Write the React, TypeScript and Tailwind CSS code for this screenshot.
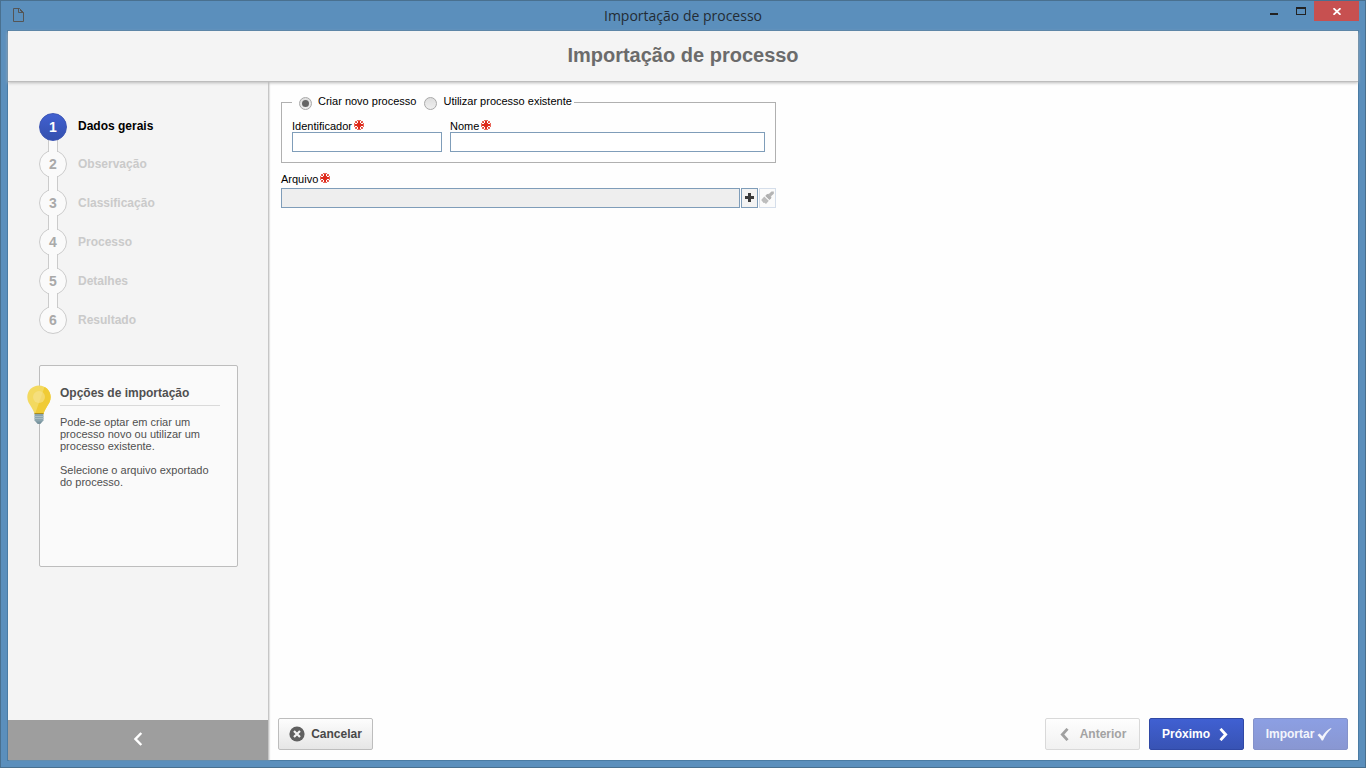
import { useState } from 'react'

const steps = ['Dados gerais', 'Observação', 'Classificação', 'Processo', 'Detalhes', 'Resultado']

const actionButton =
  'flex h-8 w-[95px] items-center justify-center rounded-[2px] border text-xs font-bold'

function RequiredMark() {
  return (
    <svg width="10" height="10" viewBox="0 0 10 10" className="shrink-0" shapeRendering="crispEdges" aria-hidden="true">
      <path d="M3 0h4v1H3zM3 9h4v1H3zM0 3h1v4H0zM9 3h1v4H9zM1 1h2v1H2v1H1zM7 1h2v2H8V2H7zM1 7h1v1h1v1H1zM8 7h1v2H7V8h1z" fill="#e8685c" />
      <path d="M4 1h2v3h3v2H6v3H4V6H1V4h3z" fill="#dd2a1c" />
      <path d="M2 2h1v1h1v1H3V3H2zM7 2h1v1H7v1H6V3h1zM2 7h1V6h1v1H3v1H2zM7 7V6H6v1h1v1h1V7z" fill="#e03a2c" />
    </svg>
  )
}

function Bulb() {
  return (
    <svg width="24" height="40" viewBox="0 0 24 40" className="absolute top-[19px] -left-[13px]" aria-hidden="true">
      <path d="M12 0.5C5.4 0.5 0.3 5.6 0.3 12c0 4 1.8 6.500 3.700 9.500 1.600 2.600 2.800 4.800 3.500 7.500h9c.7-2.700 1.900-4.900 3.500-7.500 1.900-3 3.700-5.500 3.700-9.500C23.700 5.600 18.600 .5 12 .5z" fill="#f3d95f" />
      <path d="M17.500 1.900 8 29h8.500c.7-2.700 1.900-4.900 3.500-7.500 1.900-3 3.700-5.500 3.700-9.500 0-4.300-2.300-8-6.200-10.100z" fill="#f0cb35" />
      <circle cx="12" cy="12" r="6" fill="#f7e391" opacity=".6" />
      <path d="M7.500 28h9v1.200h-9z" fill="#a98d22" />
      <path d="M7.500 29h9v6.500L15 37H9l-1.500-1.500z" fill="#8ba5ae" />
      <path d="M7.500 31.500h9M7.500 33.500h9" stroke="#aabdc3" strokeWidth="1" />
      <path d="M8.500 36.500h7L13.300 39h-2.600z" fill="#78939d" />
    </svg>
  )
}

function TitleBar() {
  return (
    <div className="flex h-[29px] shrink-0 items-start">
      <div className="flex flex-1">
        <svg width="11" height="14" viewBox="0 0 11 14" fill="none" stroke="#555" className="mt-[7px] ml-[12px]" aria-hidden="true">
          <path d="M.5 .5h6l4 4v9H.5z" />
          <path d="M5.500 .5v4h5" />
          <path d="M7 2l2 2" />
        </svg>
      </div>
      <div className="pt-[5px] font-['Open_Sans',sans-serif] text-sm leading-5 text-[#232c35]">Importação de processo</div>
      <div className="flex flex-1 justify-end">
        <button type="button" aria-label="Minimizar" className="flex h-5 w-[27px] justify-center pt-[12px]">
          <span className="h-[2px] w-2 bg-[#222]" />
        </button>
        <button type="button" aria-label="Maximizar" className="flex h-5 w-[27px] justify-center pt-[6px]">
          <span className="h-2 w-[10px] border border-t-2 border-[#222]" />
        </button>
        <button type="button" aria-label="Fechar" className="mr-[6px] flex h-5 w-[45px] items-center justify-center bg-[#c75050] text-white">
          <svg width="8" height="7" viewBox="0 0 8 7" stroke="currentColor" strokeWidth="1.700" aria-hidden="true">
            <path d="M.5 .2l7 6.600M7.500 .2l-7 6.600" />
          </svg>
        </button>
      </div>
    </div>
  )
}

function Sidebar() {
  return (
    <aside className="flex w-[261px] shrink-0 flex-col border-r border-[#c6c6c6] bg-[#f4f4f4] shadow-[1px_0_1px_#e4e4e4]">
      <ol className="mt-[31px] ml-[31px] flex flex-col">
        {steps.map((step, i) => (
          <li key={step} className={`relative flex items-start gap-[11px] ${i === 0 ? 'h-[37px]' : 'h-[39px]'}`}>
            <span
              className={`flex size-7 items-center justify-center rounded-full border text-sm font-bold ${
                i === 0
                  ? 'z-10 border-[#3c55b5] bg-linear-to-b from-[#4160d0] to-[#3450ae] text-white'
                  : 'border-[#cbcbcb] bg-[#fafafa] text-[#a9a9a9]'
              }`}
            >
              {i + 1}
            </span>
            {i < steps.length - 1 && (
              <span
                className={`absolute top-[26px] left-[9px] z-[5] w-[10px] border-x border-[#cbcbcb] bg-[#fafafa] ${
                  i === 0 ? 'h-[13px]' : 'h-[15px]'
                }`}
              />
            )}
            <span className={`text-xs leading-4 font-bold ${i === 0 ? 'pt-[5px] text-black' : 'pt-[6px] text-[#cacaca]'}`}>{step}</span>
          </li>
        ))}
      </ol>

      <section className="relative mt-5 mr-[30px] ml-[31px] h-[202px] rounded-[2px] border border-[#bdbdbd] bg-[#fafafa] pt-[19px] pr-[17px] pl-5 text-[#505050]">
        <Bulb />
        <h2 className="border-b border-[#dadada] pb-1 text-xs leading-4 font-bold">Opções de importação</h2>
        <p className="mt-[10px] text-[11px] leading-3">Pode-se optar em criar um processo novo ou utilizar um processo existente.</p>
        <p className="mt-3 text-[11px] leading-3">Selecione o arquivo exportado do processo.</p>
      </section>

      <button type="button" aria-label="Recolher" className="mt-auto flex h-10 items-center justify-center bg-[#9e9e9e] pb-[2px] text-white">
        <svg width="10" height="14" viewBox="0 0 10 14" fill="none" stroke="currentColor" strokeWidth="2.500" aria-hidden="true">
          <path d="M8.300 1 2.500 7l5.800 6" />
        </svg>
      </button>
    </aside>
  )
}

function ImportForm() {
  const [mode, setMode] = useState('new')
  const radio =
    "mt-px grid size-[13px] appearance-none place-items-center rounded-full border border-[#a8a8a8] bg-linear-to-b from-[#dedede] to-[#efefef] checked:before:size-[7px] checked:before:rounded-full checked:before:bg-[#666] checked:before:content-['']"

  return (
    <form className="w-[495px] text-[11px] leading-3 text-black">
      <fieldset className="border border-[#b0b0b0] px-[10px] pt-[10px] pb-[10px]">
        <legend className="flex h-[15px] items-center pr-[2px] pl-[7px]">
          <input id="mode-new" type="radio" name="mode" className={radio} checked={mode === 'new'} onChange={() => setMode('new')} />
          <label htmlFor="mode-new" className="mr-2 ml-[6px] pb-[3px]">Criar novo processo</label>
          <input id="mode-existing" type="radio" name="mode" className={radio} checked={mode === 'existing'} onChange={() => setMode('existing')} />
          <label htmlFor="mode-existing" className="ml-[6px] pb-[3px]">Utilizar processo existente</label>
        </legend>
        <div className="flex gap-2">
          <div className="w-[150px]">
            <label htmlFor="identifier" className="flex h-3 gap-[2px]">Identificador<RequiredMark /></label>
            <input id="identifier" type="text" className="block h-5 w-full border border-[#7f9db9] bg-white px-1 outline-none" />
          </div>
          <div className="flex-1">
            <label htmlFor="name" className="flex h-3 gap-[2px]">Nome<RequiredMark /></label>
            <input id="name" type="text" className="block h-5 w-full border border-[#7f9db9] bg-white px-1 outline-none" />
          </div>
        </div>
      </fieldset>

      <label htmlFor="file" className="mt-[10px] flex h-3 gap-[2px]">Arquivo<RequiredMark /></label>
      <div className="mt-[3px] flex gap-px">
        <input id="file" type="text" readOnly className="h-5 min-w-0 flex-1 border border-[#7f9db9] bg-[#eee] px-1 outline-none" />
        <button type="button" aria-label="Adicionar arquivo" className="flex h-5 w-[17px] items-center justify-center border border-[#7f9db9] bg-[#f3f3f3] pb-px">
          <svg width="9" height="9" viewBox="0 0 9 9" aria-hidden="true">
            <path d="M3 0h3v3h3v3H6v3H3V6H0V3h3z" fill="#3a3a3a" />
          </svg>
        </button>
        <button type="button" disabled aria-label="Limpar arquivo" className="flex h-5 w-[17px] items-center justify-center border border-[#d5deea] bg-[#fbfbfb] pb-px">
          <svg width="13" height="13" viewBox="0 0 13 13" className="shrink-0" aria-hidden="true">
            <path d="M10.500 .5h2.300v2.300L9.800 5.500 7.500 3.300z" fill="#b4b4b4" />
            <path d="M5.800 3.300 7.300 2.800 10.500 6 10 7.500 8.400 9 4.200 4.900z" fill="#b0b0b0" />
            <path d="M3.300 5.500 7.800 9.800 5 12.900 3.500 11.700l-.9.300L.2 9z" fill="#bdbdbd" />
            <path d="M3.800 5.200 8.100 9.300" stroke="#f5f5f5" strokeWidth=".8" />
          </svg>
        </button>
      </div>
    </form>
  )
}

export default function App() {
  return (
    <div className="flex h-screen flex-col border border-[#49708f] bg-[#5b8fbc] font-['Liberation_Sans',Arial,sans-serif]">
      <TitleBar />
      <div className="mx-[6px] mb-[6px] flex min-h-0 flex-1 flex-col border border-[#4a7ba3] bg-[#fefefe]">
        <header className="z-20 flex h-[51px] shrink-0 items-center justify-center border-b border-[#bdbdbd] bg-[#f4f4f4] pb-[2px] shadow-[0_1px_3px_#bbb]">
          <h1 className="text-xl leading-6 font-bold text-[#6b6b6b]">Importação de processo</h1>
        </header>
        <div className="flex min-h-0 flex-1">
          <Sidebar />
          <main className="flex flex-1 flex-col justify-between pt-[13px]">
            <div className="px-3">
              <ImportForm />
            </div>
            <footer className="flex gap-[9px] pr-[10px] pb-[10px] pl-[9px]">
              <button type="button" className={`${actionButton} mr-auto gap-[6px] border-[#bdbdbd] bg-linear-to-b from-[#fdfdfd] to-[#e6e6e6] text-[#484848]`}>
                <svg width="16" height="16" viewBox="0 0 16 16" aria-hidden="true">
                  <circle cx="8" cy="8" r="7.600" fill="#606060" />
                  <path d="M5 5l6 6M11 5l-6 6" stroke="#f4f4f4" strokeWidth="2.200" />
                </svg>
                Cancelar
              </button>
              <button type="button" disabled className={`${actionButton} gap-[11px] border-[#d9d9d9] bg-linear-to-b from-[#fefefe] to-[#f1f1f1] pl-px text-[#a3a3a3]`}>
                <svg width="9" height="13" viewBox="0 0 8 12" fill="none" stroke="#a0a0a0" strokeWidth="2.600" aria-hidden="true">
                  <path d="M6.800 .8 2 6l4.800 5.200" />
                </svg>
                Anterior
              </button>
              <button type="button" className={`${actionButton} gap-[9px] border-[#3048a5] bg-linear-to-b from-[#4060d2] to-[#3853b4] pr-[3px] text-white`}>
                Próximo
                <svg width="9" height="13" viewBox="0 0 8 12" fill="none" stroke="currentColor" strokeWidth="2.600" aria-hidden="true">
                  <path d="M1.200 .8 6 6l-4.800 5.200" />
                </svg>
              </button>
              <button type="button" disabled className={`${actionButton} gap-[3px] border-[#8492ca] bg-linear-to-b from-[#8c9fe3] to-[#8997d2] pr-[3px] text-[#f3f5fc]`}>
                Importar
                <svg width="15" height="13" viewBox="0 0 14 13" fill="currentColor" aria-hidden="true">
                  <path d="M0 7l2-1.500 2.800 2.800C7 4.700 9.800 1.700 13.500 0L14 .6C10.500 3.800 7.800 7.600 5.500 12.400H4.200C3 10.200 1.600 8.600 0 7z" />
                </svg>
              </button>
            </footer>
          </main>
        </div>
      </div>
    </div>
  )
}
